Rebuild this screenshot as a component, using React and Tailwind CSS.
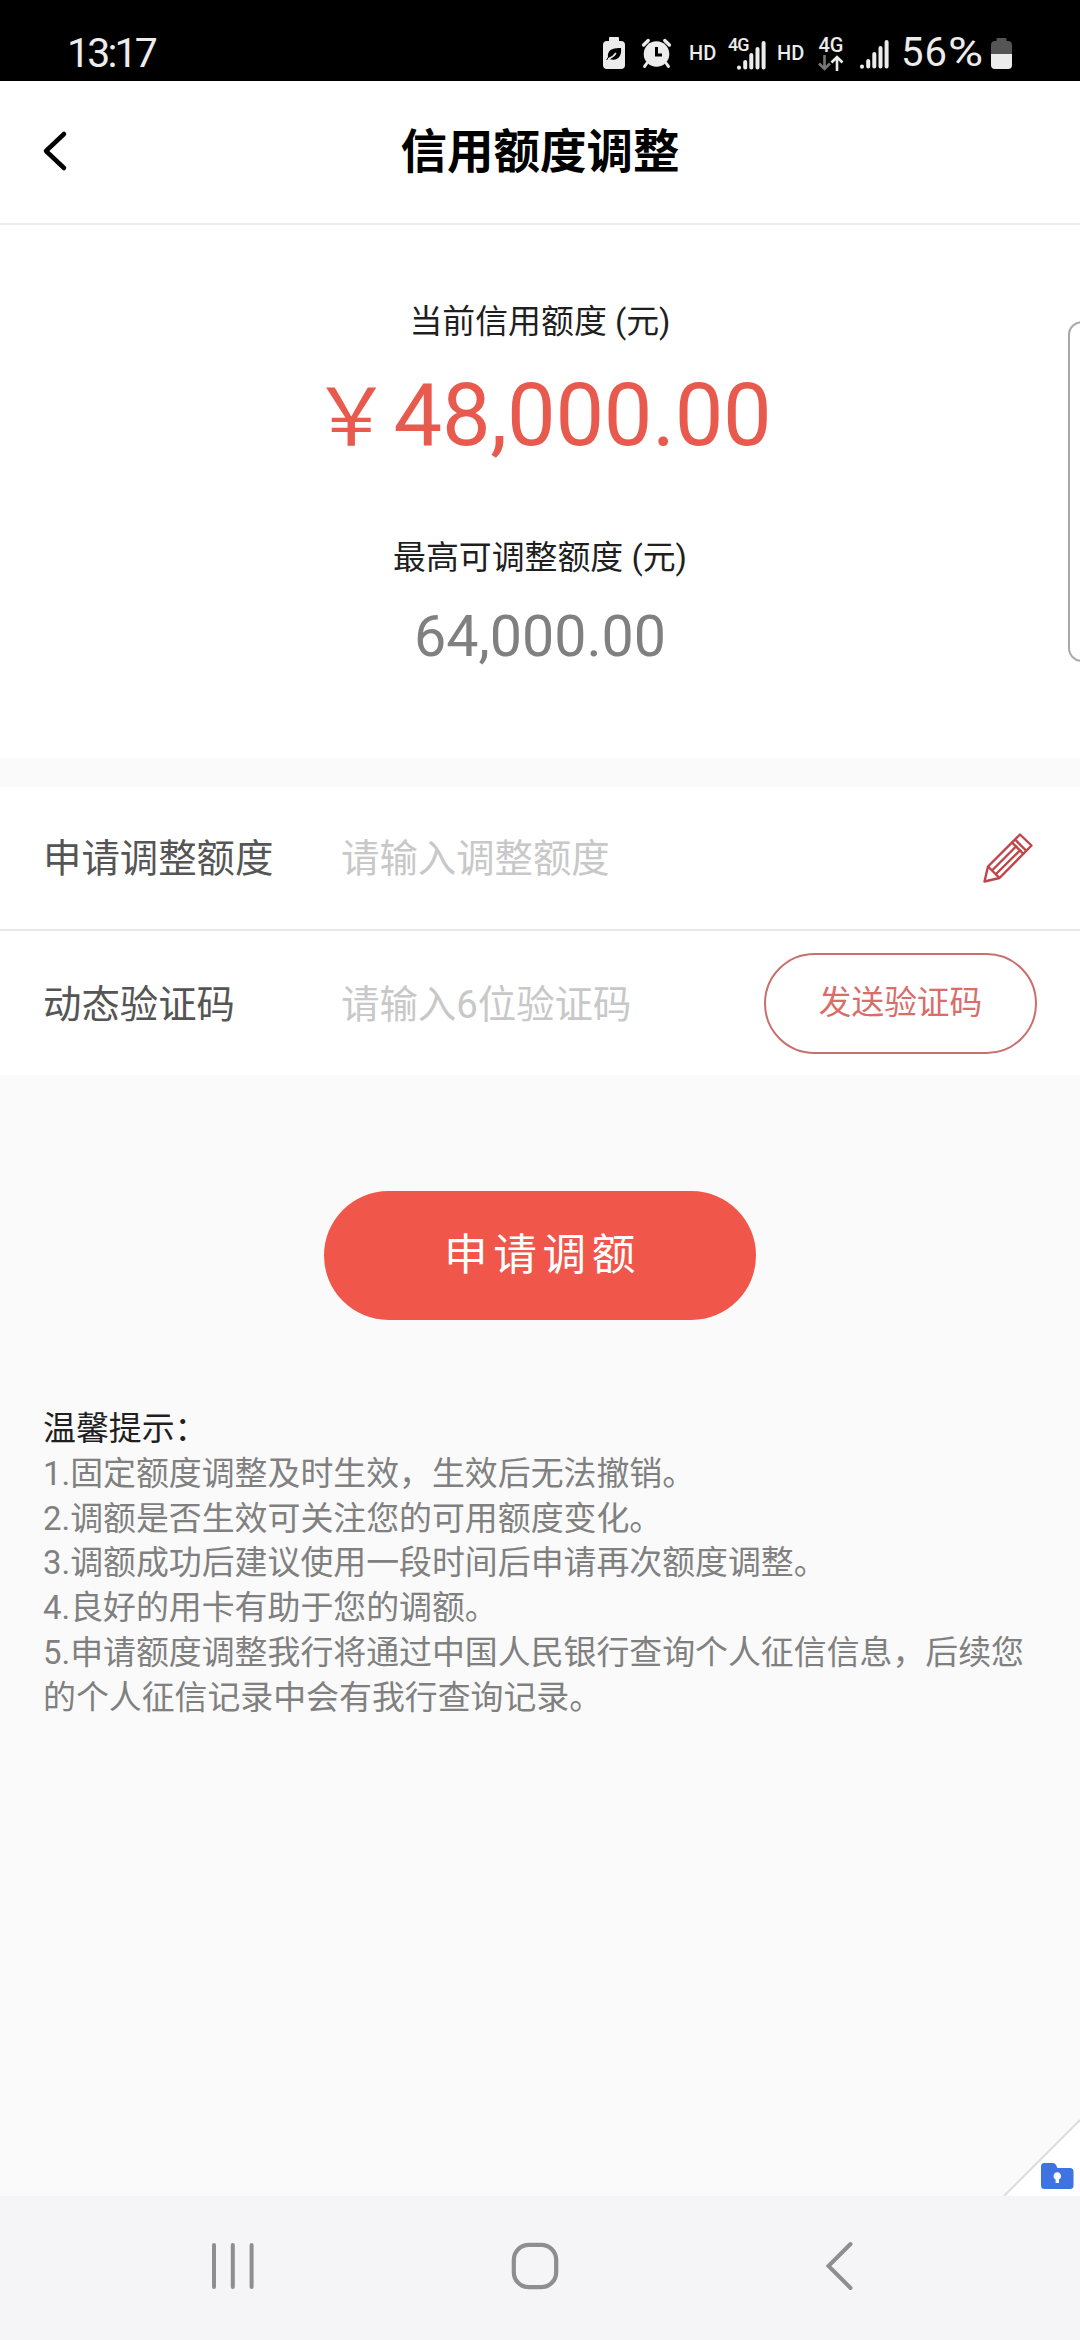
import { useState } from 'react';

const tips = [
  '1.固定额度调整及时生效，生效后无法撤销。',
  '2.调额是否生效可关注您的可用额度变化。',
  '3.调额成功后建议使用一段时间后申请再次额度调整。',
  '4.良好的用卡有助于您的调额。',
  '5.申请额度调整我行将通过中国人民银行查询个人征信信息，后续您的个人征信记录中会有我行查询记录。'
];

function SignalBars({ className }) {
  return (
    <svg className={className} width="29" height="30" viewBox="0 0 29 30" stroke="#ececec" strokeWidth="4" strokeLinecap="round">
      <path d="M2 27.5v.2M8.2 22v5.5M14.3 15v12.5M20.5 9v18.5M26.6 3v24.5" />
    </svg>
  );
}

function StatusBar() {
  return (
    <div className="flex h-[81px] items-center bg-black pt-[25px] pl-[67px] text-[#ececec]">
      <span className="w-[535px] text-[41px] tracking-[-2.800px] leading-none">13:17</span>

      {/* Power saving */}
      <svg width="24" height="34" viewBox="0 0 24 34">
        <path d="M8 1h8q1 0 1 1v3h2q4 0 4 4v20q0 4-4 4H5q-4 0-4-4V9q0-4 4-4h2V2q0-1 1-1z" fill="#ececec" />
        <path d="M19 12c-8-.5-14 2-13 9l-2 3 3-1c9 3 13-3 12-11z" fill="#000" />
        <path d="M6 23c3-1 6-3 8-6" stroke="#ececec" strokeWidth="1.4" fill="none" />
      </svg>

      {/* Alarm */}
      <svg className="ml-[15px]" width="31" height="32" viewBox="0 0 31 32" strokeLinecap="round" fill="none">
        <circle cx="15.5" cy="17" r="12.8" fill="#ececec" />
        <path d="M2.6 8l4.600-4.500M28.400 8l-4.600-4.500" stroke="#ececec" strokeWidth="3.4" />
        <path d="M6 26l-2.400 3.400M25 26l2.400 3.400" stroke="#ececec" strokeWidth="3" />
        <path d="M15.5 10v8h5.5" stroke="#000" strokeWidth="3" strokeLinecap="butt" />
      </svg>

      <span className="ml-[17px] w-[28px] text-[20px] font-medium leading-none">HD</span>

      <div className="relative ml-[11px] h-8 w-[39px]">
        <span className="absolute -top-[1px] left-0 text-[18px] font-medium leading-none tracking-[-1px]">4G</span>
        <SignalBars className="absolute top-[3px] left-[9px]" />
      </div>

      <span className="ml-[10px] w-[28px] text-[20px] font-medium leading-none">HD</span>

      <div className="ml-[13px] flex w-[26px] flex-col items-center">
        <span className="text-[20px] font-medium leading-[19px]">4G</span>
        <svg width="26" height="16" viewBox="0 0 26 16" fill="none" strokeWidth="2.6">
          <path d="M6.500 0v13.500M1 8.500l5.500 5.500 5.500-5.500" stroke="#777" />
          <path d="M19 16V2.500M13.500 7.500l5.500-5.500 5.500 5.500" stroke="#ececec" />
        </svg>
      </div>

      <SignalBars className="mt-[2px] ml-[16px]" />

      <span className="ml-[12px] w-[89px] text-[40px] leading-none tracking-[1px]">
        56<span className="inline-block origin-left scale-x-120">%</span>
      </span>

      <svg width="23" height="33" viewBox="0 0 23 33">
        <path d="M7.500 1h8q1 0 1 1v2h1.500q4 0 4 4v9H1V8q0-4 4-4h1.500V2q0-1 1-1z" fill="#555" />
        <path d="M1 17h21v11q0 4-4 4H5q-4 0-4-4z" fill="#ececec" />
      </svg>
    </div>
  );
}

function Header() {
  return (
    <header className="flex h-36 items-center border-b-2 border-[#ececec] px-[41px]">
      <button className="w-10 pb-[3px]">
        <svg width="28" height="42" viewBox="0 0 28 42" fill="none" stroke="#000" strokeWidth="4.5" strokeLinecap="round" strokeLinejoin="round">
          <path d="M23 4L5 21l18 17" />
        </svg>
      </button>
      <h1 className="flex-1 text-center text-[46.500px] font-bold leading-[60px] text-black">信用额度调整</h1>
      <div className="w-10" />
    </header>
  );
}

function NavBar() {
  return (
    <nav className="flex h-36 items-center bg-[#f5f5f7] pb-[4px] pl-[209px]">
      <svg width="48" height="50" viewBox="0 0 48 50" stroke="#8e8e90" strokeWidth="4" strokeLinecap="round">
        <path d="M5 4v42M23.800 4v42M42.600 4v42" />
      </svg>
      <svg className="ml-[253px]" width="50" height="50" viewBox="0 0 50 50" fill="none" stroke="#8e8e90" strokeWidth="4.200">
        <rect x="3.800" y="3.800" width="42.400" height="42.400" rx="15" />
      </svg>
      <svg className="ml-[263px]" width="32" height="52" viewBox="0 0 32 52" fill="none" stroke="#8e8e90" strokeWidth="4" strokeLinecap="round" strokeLinejoin="miter">
        <path d="M27.500 4L5.500 26l22 22" />
      </svg>
    </nav>
  );
}

function App() {
  const [amount, setAmount] = useState('');
  const [code, setCode] = useState('');

  return (
    <div className="relative flex h-[2340px] w-[1080px] flex-col overflow-hidden bg-[#fafafa] font-['Roboto','Noto_Sans_CJK_SC',sans-serif]">
      <StatusBar />

      <div className="bg-white">
        <Header />

        <section className="flex h-[533px] flex-col items-center pt-[73px]">
          <p className="text-[32.900px] leading-[48px] text-[#1f1f1f]">当前信用额度 (元)</p>
          <p className="mt-[20px] text-[86.600px] leading-[100px] tracking-[-0.300px] text-[#e95a4e]">
            <span className="inline-block w-[85px] text-center text-[80px]">￥</span>48,000.00
          </p>
          <p className="mt-[66px] text-[32.900px] leading-[48px] text-[#1f1f1f]">最高可调整额度 (元)</p>
          <p className="mt-[19px] text-[57.400px] leading-[72px] text-[#808080]">64,000.00</p>
        </section>
      </div>

      <form className="mt-[29px] bg-white text-[38.400px]" onSubmit={(e) => e.preventDefault()}>
        <div className="flex h-36 items-center border-b-2 border-[#e6e6e6] px-[43px]">
          <label htmlFor="amount" className="w-[298px] pt-[2px] text-[#555]">申请调整额度</label>
          <input
            id="amount"
            value={amount}
            onChange={(e) => setAmount(e.target.value)}
            placeholder="请输入调整额度"
            className="w-[600px] pt-[2px] outline-none placeholder:text-[#c8c8c8]"
          />
          <svg className="ml-[42px]" width="50" height="50" viewBox="0 0 50 50" fill="none" stroke="#bf4549" strokeWidth="2.400" strokeLinejoin="round">
            <path d="M1.500 48.500L5 33.500 37 1.500l11.500 11L16.500 45z" />
            <path d="M5 33.500L16.500 45M9 37.500L34 12.500M13 41L38 16.500M29 9.500l11.500 11.500M32 6.500l11.500 11.500" />
          </svg>
        </div>

        <div className="flex h-36 items-center px-[43px]">
          <label htmlFor="code" className="w-[298px] pt-[3px] text-[#555]">动态验证码</label>
          <input
            id="code"
            value={code}
            onChange={(e) => setCode(e.target.value)}
            placeholder="请输入6位验证码"
            className="w-[423px] pt-[3px] outline-none placeholder:text-[#c8c8c8]"
          />
          <button type="button" className="h-[101px] w-[273px] rounded-full border-2 border-[#c96f6d] pt-[2px] text-[32.700px] text-[#d96d69]">
            发送验证码
          </button>
        </div>
      </form>

      <button className="mt-[116px] h-[129px] w-[432px] self-center rounded-full bg-[#f0564a] pl-[5px] text-[43.600px] tracking-[5.600px] text-white">
        申请调额
      </button>

      <section className="mt-[87px] flex-1 px-[43px] text-[32.900px] leading-[44.800px] text-[#808080]">
        <h2 className="text-[#1f1f1f]">温馨提示：</h2>
        {tips.map((tip) => (
          <p key={tip}>{tip}</p>
        ))}
      </section>

      <NavBar />

      {/* Edge panel handle */}
      <div className="absolute top-[321px] -right-4 h-[341px] w-7 rounded-[14px] border-2 border-[#a8a8a8] bg-white" />

      {/* Folded corner */}
      <svg className="absolute right-0 bottom-36" width="78" height="78" viewBox="0 0 78 78">
        <path d="M2 78L78 2v76z" fill="#fff" />
        <path d="M2 78L78 2" stroke="#dcdcdc" strokeWidth="2" />
        <path d="M42 45h9q2 0 3 2l1.500 3H68q3.500 0 3.500 3.500v14Q71.500 71 68 71H42.500Q39 71 39 67.500v-19Q39 45 42 45z" fill="#3f72e3" />
        <path d="M53.600 61.500a3.800 3.800 0 1 1 3.400 0V65h-3.400z" fill="#fff" />
      </svg>
    </div>
  );
}

export default App;
